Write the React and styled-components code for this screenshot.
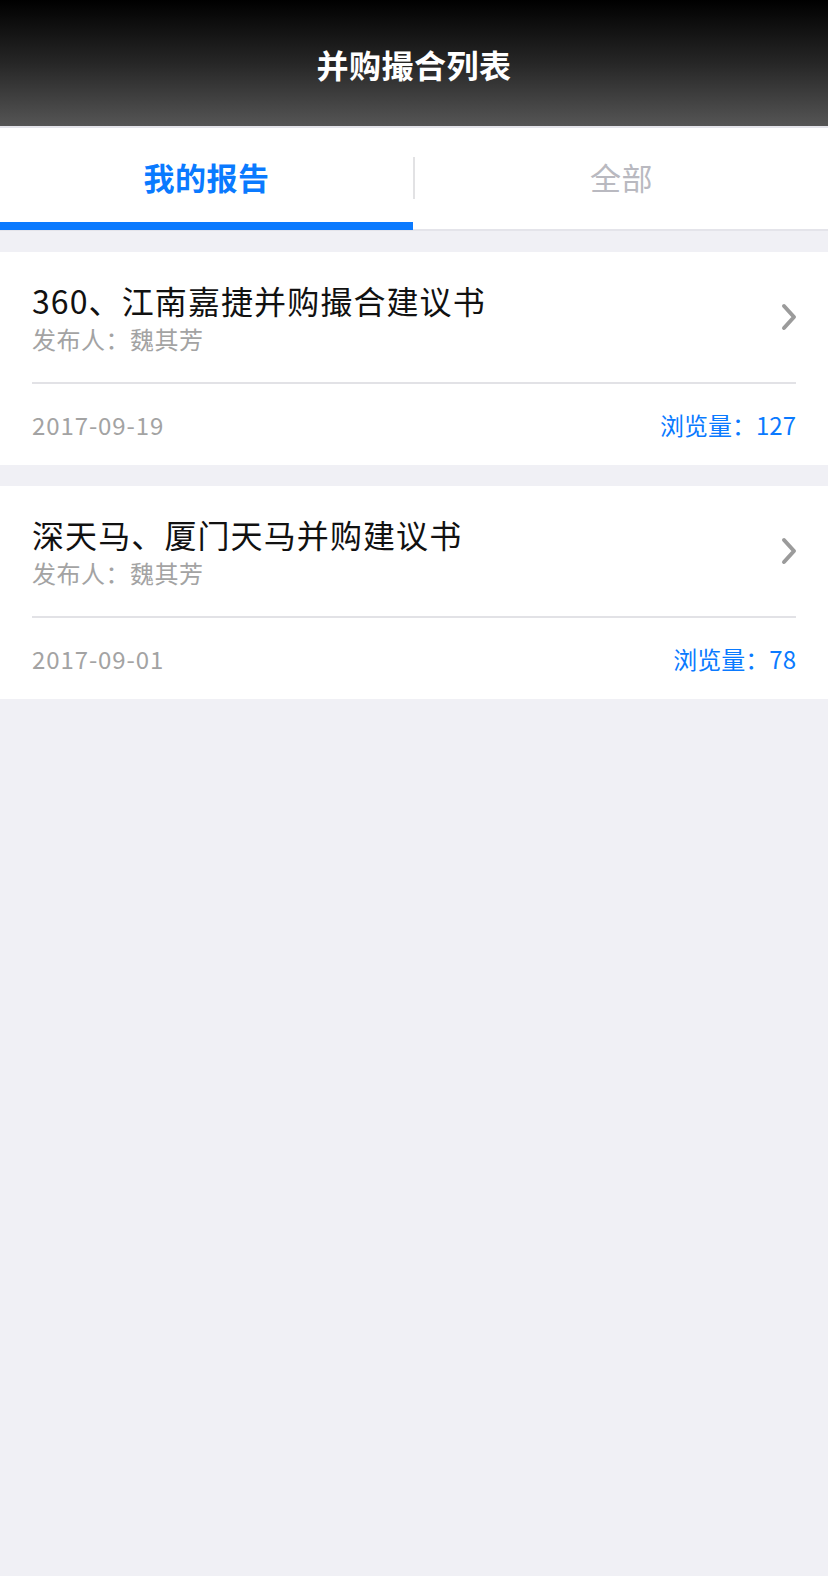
import React, { useState } from 'react';
import styled, { createGlobalStyle } from 'styled-components';

const GlobalStyle = createGlobalStyle`
  html, body {
    margin: 0;
    padding: 0;
    background: #f0f0f5;
  }
  body {
    font-family: "Noto Sans CJK SC", "Liberation Sans", sans-serif;
    -webkit-font-smoothing: antialiased;
  }
`;

const reports = {
  mine: [
    { id: 1, title: '360、江南嘉捷并购撮合建议书', author: '魏其芳', date: '2017-09-19', views: 127 },
    { id: 2, title: '深天马、厦门天马并购建议书', author: '魏其芳', date: '2017-09-01', views: 78 }
  ],
  all: []
};

const Page = styled.div`
  min-height: 1576px;
  background: #f0f0f5;
`;

const NavBar = styled.header`
  height: 126px;
  display: flex;
  align-items: center;
  justify-content: center;
  background: linear-gradient(180deg, #000 0%, #262626 50%, #555 100%);
  border-bottom: 2px solid #e4e4ea;
`;

const NavTitle = styled.h1`
  margin: 0;
  color: #fff;
  font-size: 32px;
  font-weight: 700;
  line-height: 40px;
  margin-top: 2px;
  letter-spacing: 0.5px;
`;

const Tabs = styled.nav`
  display: flex;
  height: 101px;
  background: #fff;
  border-bottom: 2px solid #e4e4ea;
`;

const Tab = styled.button`
  position: relative;
  flex: 1;
  display: flex;
  align-items: center;
  justify-content: center;
  border: 0;
  padding: 0 0 4px;
  background: none;
  font-family: inherit;
  font-size: 31px;
  letter-spacing: 0.5px;
  font-weight: ${(p) => (p.$active ? 700 : 400)};
  color: ${(p) => (p.$active ? '#0a7aff' : '#b9b9c0')};
  cursor: pointer;

  &::after {
    content: '';
    position: absolute;
    left: 0;
    right: 0;
    bottom: -1px;
    height: 8px;
    background: ${(p) => (p.$active ? '#0a7aff' : 'transparent')};
  }
`;

const TabDivider = styled.span`
  width: 2px;
  height: 42px;
  margin-top: 29px;
  background: #e2e2e4;
`;

const List = styled.section`
  display: flex;
  flex-direction: column;
  gap: 21px;
  padding-top: 21px;
`;

const Card = styled.article`
  background: #fff;
  padding: 0 32px;
`;

const CardHead = styled.div`
  display: flex;
  align-items: center;
  padding: 28px 0 29px;
  border-bottom: 2px solid #e2e2e6;
`;

const CardText = styled.div`
  flex: 1;
  min-width: 0;
`;

const Title = styled.h2`
  margin: 0;
  font-size: 32px;
  font-weight: 400;
  line-height: 40px;
  letter-spacing: 1.1px;
  color: #111;
`;

const Author = styled.p`
  margin: 5px 0 0;
  font-size: 24px;
  line-height: 28px;
  letter-spacing: 0.5px;
  color: #a3a3a3;
`;

const Chevron = styled.svg`
  flex: none;
  width: 16px;
  height: 28px;
  margin-right: -1px;
`;

const CardFoot = styled.div`
  height: 81px;
  display: flex;
  align-items: center;
  justify-content: space-between;
  font-size: 24px;
`;

const DateText = styled.span`
  color: #a3a3a3;
  letter-spacing: 0.9px;
`;

const Views = styled.span`
  color: #0a7aff;
`;

const ReportCard = ({ report }) => (
  <Card>
    <CardHead>
      <CardText>
        <Title>{report.title}</Title>
        <Author>发布人：{report.author}</Author>
      </CardText>
      <Chevron viewBox="0 0 16 28" fill="none">
        <path d="M3 3 L13 14 L3 25" stroke="#9b9b9b" strokeWidth="4" strokeLinecap="round" strokeLinejoin="round" />
      </Chevron>
    </CardHead>
    <CardFoot>
      <DateText>{report.date}</DateText>
      <Views>浏览量：{report.views}</Views>
    </CardFoot>
  </Card>
);

export default function App() {
  const [tab, setTab] = useState('mine');
  const items = tab === 'mine' ? reports.mine : reports.all;

  return (
    <Page>
      <GlobalStyle />
      <NavBar>
        <NavTitle>并购撮合列表</NavTitle>
      </NavBar>
      <Tabs>
        <Tab $active={tab === 'mine'} onClick={() => setTab('mine')}>我的报告</Tab>
        <TabDivider />
        <Tab $active={tab === 'all'} onClick={() => setTab('all')}>全部</Tab>
      </Tabs>
      <List>
        {items.map((r) => (
          <ReportCard key={r.id} report={r} />
        ))}
      </List>
    </Page>
  );
}
